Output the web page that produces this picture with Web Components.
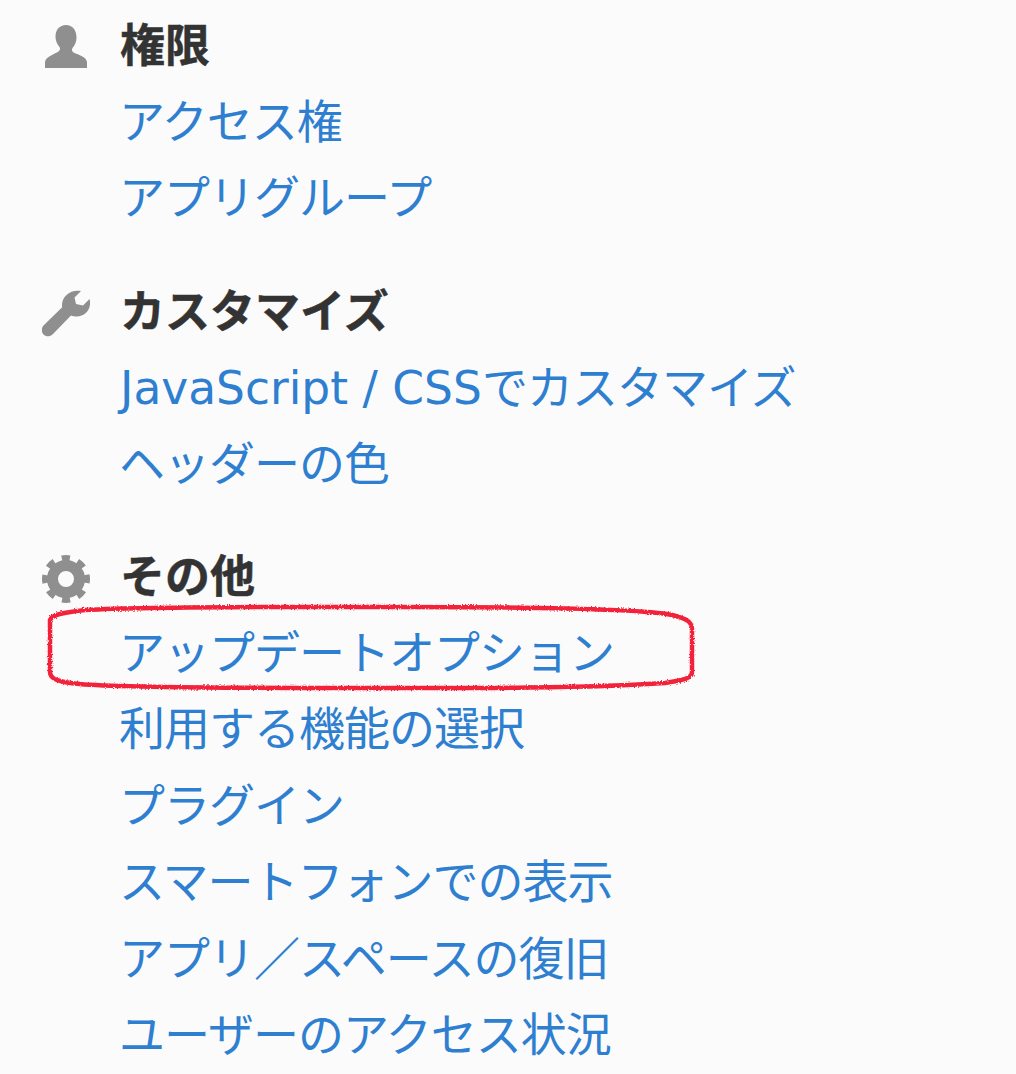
<!DOCTYPE html>
<html lang="ja"><head><meta charset="utf-8"><title>設定</title>
<style>html,body{margin:0;padding:0;background:#fbfbfc}body{width:1016px;height:1074px;overflow:hidden}</style></head>
<body>
<settings-page>
  <settings-section style="--gap:0px"><svg slot="icon" width="48" height="48" viewBox="0 0 48 48"><path fill="#8f8f8f" d="M24 1c-6.500 0-10.500 5-10.500 11.500 0 4 1.500 8 4 10.500 1 1.500.5 3.500-1 4.500C11 31 4 32.500 3 38v6h42v-6c-1-5.500-8-7-13.500-9.500-1.500-1-2-3-1-4.500 2.500-2.500 4-6.500 4-10.500C34.500 6 30.500 1 24 1z"/></svg>
    <span slot="title">権限</span>
    <settings-link>アクセス権</settings-link><settings-link>アプリグループ</settings-link></settings-section>
  <settings-section style="--gap:38px"><svg slot="icon" width="48" height="48" viewBox="0 0 48 48"><path fill="#8f8f8f" d="M39 1C29-1 20 6 20 15c0 .8 0 1.500.2 2.200L2 35c-3 3-3 7-.5 9.500s6.500 2.500 9.500-.5l18-18.500c2 .6 3.500 1 5.500 1C44 26.500 50 18 47.500 9L41 15.500l-7-1.500-1.500-6.500z"/></svg>
    <span slot="title">カスタマイズ</span>
    <settings-link><span style="letter-spacing:0;font-size:45.500px;margin-left:1px">JavaScript / CSS</span>でカスタマイズ</settings-link><settings-link>ヘッダーの色</settings-link></settings-section>
  <settings-section style="--gap:37px;--row:76.4px"><svg slot="icon" width="48" height="48" viewBox="0 0 48 48"><circle cx="24" cy="24" r="13.500" fill="none" stroke="#8f8f8f" stroke-width="11"/><circle cx="24" cy="24" r="20.500" fill="none" stroke="#8f8f8f" stroke-width="7" stroke-dasharray="8.100 8" stroke-dashoffset="4.050" pathLength="129"/></svg>
    <span slot="title">その他</span>
    <settings-link>アップデートオプション</settings-link><settings-link>利用する機能の選択</settings-link><settings-link>プラグイン</settings-link><settings-link>スマートフォンでの表示</settings-link><settings-link>アプリ／スペースの復旧</settings-link><settings-link>ユーザーのアクセス状況</settings-link></settings-section>
  <hand-circle></hand-circle>
</settings-page>
<script>
class SettingsPage extends HTMLElement{constructor(){super();this.attachShadow({mode:'open'}).innerHTML=`<style>
:host{display:block;position:relative;width:1016px;height:1074px;overflow:hidden;box-sizing:border-box;padding-top:8px;font-family:"DejaVu Sans","Noto Sans CJK JP",sans-serif}
svg.paper{position:absolute;inset:0;z-index:-1}
</style><svg class="paper" width="1016" height="1074"><filter id="n" x="0" y="0" width="100%" height="100%"><feTurbulence type="fractalNoise" baseFrequency=".4" numOctaves="3" seed="4"/><feColorMatrix values="0 0 0 0 .84 0 0 0 0 .84 0 0 0 0 .9 1.600 1.600 1.600 0 -2.200"/></filter><rect width="1016" height="1074" fill="#fefefe"/><rect width="1016" height="1074" filter="url(#n)"/></svg><slot></slot>`}}
class SettingsSection extends HTMLElement{constructor(){super();this.attachShadow({mode:'open'}).innerHTML=`<style>
:host{display:grid;grid-template-columns:120px 1fr;margin-top:var(--gap,0);position:relative}
.ic{padding:16px 0 0 42px;height:48px}.ic ::slotted(svg){display:block;filter:blur(.6px)}
h2{margin:0;font-size:45px;line-height:76px;font-weight:700;color:#333;height:76px;white-space:nowrap;-webkit-text-stroke:.5px #333;position:relative;top:1px}
.list{grid-column:2;display:flex;flex-direction:column}
</style><div class="ic"><slot name="icon"></slot></div><h2><slot name="title"></slot></h2><div class="list"><slot></slot></div>`}}
class SettingsLink extends HTMLElement{constructor(){super();this.attachShadow({mode:'open'}).innerHTML=`<style>
:host{display:block;font-size:46px;letter-spacing:-1px;margin-left:-1px;line-height:76px;height:var(--row,76px);color:#2f7fd1;white-space:nowrap;font-weight:400}
</style><slot></slot>`}}
class HandCircle extends HTMLElement{constructor(){super();this.attachShadow({mode:'open'}).innerHTML=`<style>
:host{position:absolute;left:40px;top:600px;display:block;width:665px;height:100px}
</style><svg width="665" height="100" viewBox="0 0 665 100"><filter id="r" x="-2%" y="-10%" width="104%" height="120%"><feTurbulence type="fractalNoise" baseFrequency=".7" numOctaves="2" seed="7"/><feDisplacementMap in="SourceGraphic" scale="3"/><feGaussianBlur stdDeviation=".6"/></filter><path filter="url(#r)" fill="none" stroke="#f2243a" stroke-width="4.500" d="M10 20C12 15 20 13 45 10 120 6 260 7 360 7 470 7 600 8 632 15 648 19 652 22 652 30L652 72C652 78 645 80 625 83 540 89 400 88 300 88 200 88 70 87 40 84 18 82 10 79 10 72Z"/></svg>`}}
customElements.define('settings-page',SettingsPage);customElements.define('settings-section',SettingsSection);customElements.define('settings-link',SettingsLink);customElements.define('hand-circle',HandCircle);
</script></body></html>
